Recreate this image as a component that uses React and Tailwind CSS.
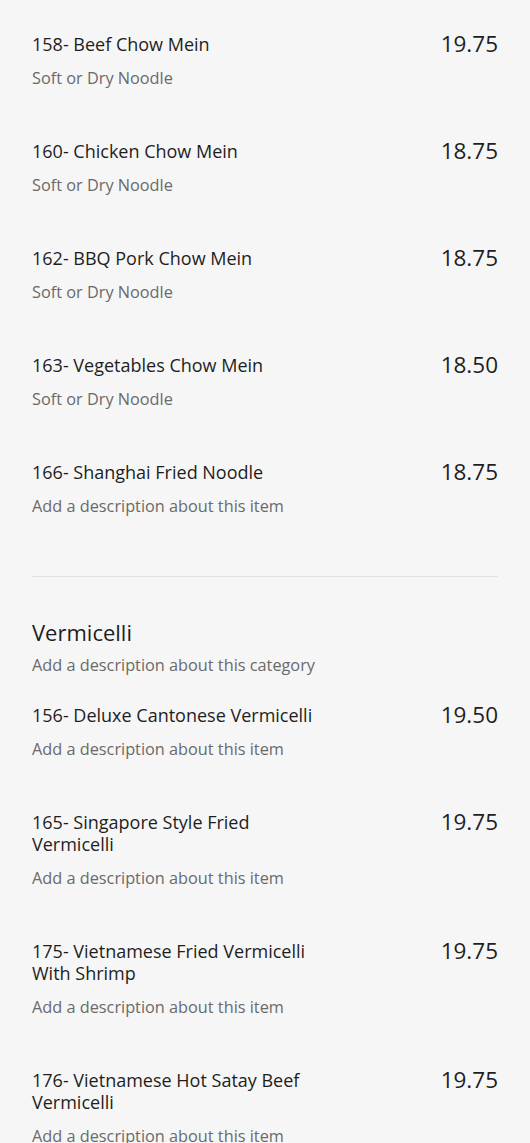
import React from 'react';

const chowMein = [
  { name: '158- Beef Chow Mein', desc: 'Soft or Dry Noodle', price: '19.75' },
  { name: '160- Chicken Chow Mein', desc: 'Soft or Dry Noodle', price: '18.75' },
  { name: '162- BBQ Pork Chow Mein', desc: 'Soft or Dry Noodle', price: '18.75' },
  { name: '163- Vegetables Chow Mein', desc: 'Soft or Dry Noodle', price: '18.50' },
  { name: '166- Shanghai Fried Noodle', desc: 'Add a description about this item', price: '18.75' },
];

const vermicelli = [
  { name: '156- Deluxe Cantonese Vermicelli', desc: 'Add a description about this item', price: '19.50' },
  { name: '165- Singapore Style Fried Vermicelli', desc: 'Add a description about this item', price: '19.75' },
  { name: '175- Vietnamese Fried Vermicelli With Shrimp', desc: 'Add a description about this item', price: '19.75' },
  { name: '176- Vietnamese Hot Satay Beef Vermicelli', desc: 'Add a description about this item', price: '19.75' },
];

const MenuItem = ({ item }) => (
  <div className="flex items-start justify-between">
    <div className="w-[295px]">
      <p className="text-[18px] leading-[22px] text-[#1e1e1e]">{item.name}</p>
      <p className="mt-[11px] text-[16.3px] leading-6 text-[#6a6a6a]">{item.desc}</p>
    </div>
    <p className="text-[22.5px] leading-[26px] -mt-[2px] text-[#1e1e1e]">{item.price}</p>
  </div>
);

const App = () => {
  return (
    <div className="min-h-screen bg-[#f6f6f6] px-8 pt-[33px] font-['Open_Sans',sans-serif]">
      <div className="flex flex-col gap-[50px]">
        {chowMein.map((item, i) => (
          <MenuItem key={i} item={item} />
        ))}
      </div>

      <div className="mt-[58px] border-t border-[#e2e2e2]" />

      {/* Vermicelli category */}
      <div className="pt-[41px]">
        <h2 className="text-[22px] leading-[28px] text-[#1e1e1e]">Vermicelli</h2>
        <p className="mt-[7px] text-[16.3px] leading-6 text-[#6a6a6a]">Add a description about this category</p>
      </div>

      <div className="mt-[27px] flex flex-col gap-[50px]">
        {vermicelli.map((item, i) => (
          <MenuItem key={i} item={item} />
        ))}
      </div>
    </div>
  );
};

export default App;
